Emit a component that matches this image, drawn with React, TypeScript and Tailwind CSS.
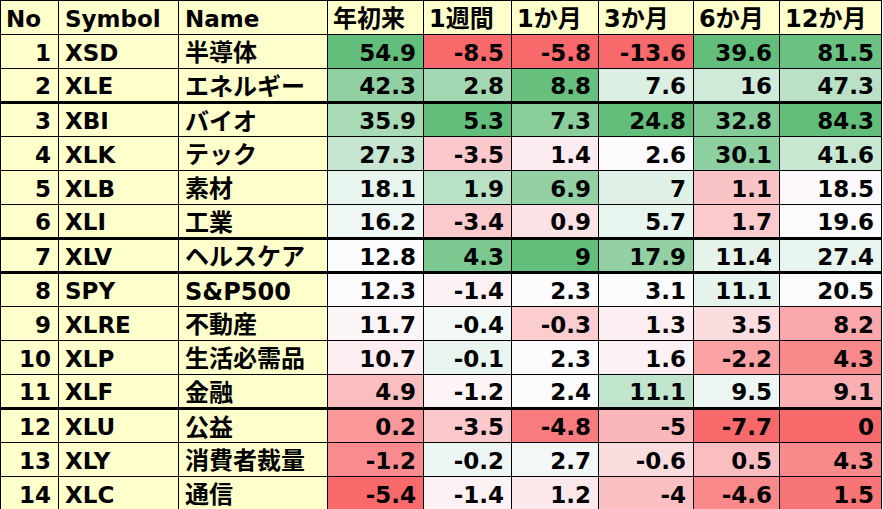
import React from "react";

type Row = { no: number; sym: string; name: string; v: number[] };

const headers = ["年初来", "1週間", "1か月", "3か月", "6か月", "12か月"];

const rows: Row[] = [
  { no: 1, sym: "XSD", name: "半導体", v: [54.9, -8.5, -5.8, -13.6, 39.6, 81.5] },
  { no: 2, sym: "XLE", name: "エネルギー", v: [42.3, 2.8, 8.8, 7.6, 16, 47.3] },
  { no: 3, sym: "XBI", name: "バイオ", v: [35.9, 5.3, 7.3, 24.8, 32.8, 84.3] },
  { no: 4, sym: "XLK", name: "テック", v: [27.3, -3.5, 1.4, 2.6, 30.1, 41.6] },
  { no: 5, sym: "XLB", name: "素材", v: [18.1, 1.9, 6.9, 7, 1.1, 18.5] },
  { no: 6, sym: "XLI", name: "工業", v: [16.2, -3.4, 0.9, 5.7, 1.7, 19.6] },
  { no: 7, sym: "XLV", name: "ヘルスケア", v: [12.8, 4.3, 9, 17.9, 11.4, 27.4] },
  { no: 8, sym: "SPY", name: "S&P500", v: [12.3, -1.4, 2.3, 3.1, 11.1, 20.5] },
  { no: 9, sym: "XLRE", name: "不動産", v: [11.7, -0.4, -0.3, 1.3, 3.5, 8.2] },
  { no: 10, sym: "XLP", name: "生活必需品", v: [10.7, -0.1, 2.3, 1.6, -2.2, 4.3] },
  { no: 11, sym: "XLF", name: "金融", v: [4.9, -1.2, 2.4, 11.1, 9.5, 9.1] },
  { no: 12, sym: "XLU", name: "公益", v: [0.2, -3.5, -4.8, -5, -7.7, 0] },
  { no: 13, sym: "XLY", name: "消費者裁量", v: [-1.2, -0.2, 2.7, -0.6, 0.5, 4.3] },
  { no: 14, sym: "XLC", name: "通信", v: [-5.4, -1.4, 1.2, -4, -4.6, 1.5] },
];

// rows followed by a heavier rule
const thick = new Set([2, 6, 7, 11]);

const RED = [248, 105, 107];
const MID = [252, 252, 255];
const GREEN = [99, 190, 123];

function mix(a: number[], b: number[], t: number) {
  const c = a.map((x, i) => Math.round(x + (b[i] - x) * t));
  return `rgb(${c[0]},${c[1]},${c[2]})`;
}

// excel style 3-colour scale: min / 50th percentile / max
function scale(col: number[]) {
  const s = [...col].sort((a, b) => a - b);
  const min = s[0];
  const max = s[s.length - 1];
  const pos = (s.length - 1) / 2;
  const mid = s[Math.floor(pos)] + (s[Math.ceil(pos)] - s[Math.floor(pos)]) * (pos - Math.floor(pos));
  return (v: number) => {
    if (v <= mid) return mix(RED, MID, mid === min ? 1 : (v - min) / (mid - min));
    return mix(MID, GREEN, (v - mid) / (max - mid));
  };
}

const scales = headers.map((_, i) => scale(rows.map((r) => r.v[i])));

const font = { fontFamily: '"DejaVu Sans", "Noto Sans CJK JP", sans-serif' };

export default function App() {
  return (
    <div className="w-[883px] h-[509px] overflow-hidden bg-white" style={font}>
      <table className="table-fixed border-collapse text-[23px] font-bold text-black leading-none">
        <colgroup>
          <col className="w-[58px]" />
          <col className="w-[120px]" />
          <col className="w-[149px]" />
          <col className="w-[96px]" />
          <col className="w-[88px]" />
          <col className="w-[87px]" />
          <col className="w-[95px]" />
          <col className="w-[86px]" />
          <col className="w-[102px]" />
        </colgroup>
        <thead>
          <tr className="h-[34px] bg-[#ffffcc]">
            <th className="border border-black px-[5px] pt-[3px] text-left font-bold">No</th>
            <th className="border border-black px-[6px] pt-[3px] text-left font-bold">Symbol</th>
            <th className="border border-black px-[6px] pt-[3px] text-left font-bold">Name</th>
            {headers.map((h) => (
              <th key={h} className="border border-black px-[5px] pt-[3px] text-left font-bold whitespace-nowrap text-[24px]">
                {h}
              </th>
            ))}
          </tr>
        </thead>
        <tbody>
          {rows.map((r) => {
            const b = thick.has(r.no) ? "border border-black border-b-[3px]" : "border border-black";
            return (
              <tr key={r.no} className="h-[34px]">
                <td className={`${b} bg-[#ffffcc] px-[7px] pt-[3px] text-right`}>{r.no}</td>
                <td className={`${b} bg-[#ffffcc] px-[6px] pt-[3px]`}>{r.sym}</td>
                <td className={`${b} bg-[#ffffcc] px-[6px] pt-[3px] whitespace-nowrap overflow-hidden text-[24px]`}>
                  {r.name}
                </td>
                {r.v.map((v, i) => (
                  <td
                    key={i}
                    className={`${b} px-[7px] pt-[3px] text-right`}
                    style={{ backgroundColor: scales[i](v) }}
                  >
                    {v}
                  </td>
                ))}
              </tr>
            );
          })}
        </tbody>
      </table>
    </div>
  );
}
